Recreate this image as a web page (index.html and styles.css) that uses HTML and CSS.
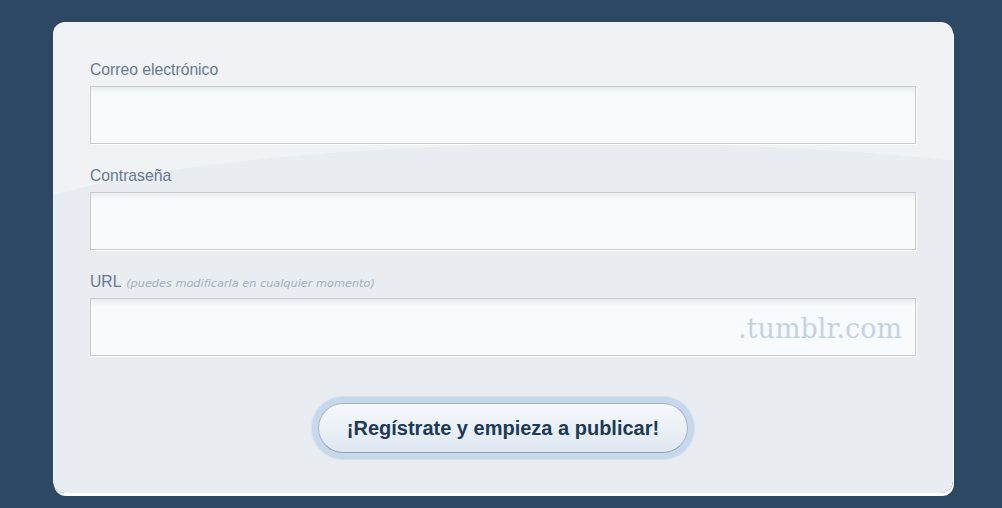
FILE: index.html
```html
<!DOCTYPE html>
<html lang="es">
<head>
<meta charset="utf-8">
<title>Regístrate</title>
<link rel="stylesheet" href="styles.css">
</head>
<body>
<form class="card">
  <div class="field">
    <label class="label" for="email">Correo electrónico</label>
    <div class="box"><input id="email" class="input" type="text"></div>
  </div>
  <div class="field">
    <label class="label" for="pass">Contraseña</label>
    <div class="box"><input id="pass" class="input" type="password"></div>
  </div>
  <div class="field">
    <label class="label" for="url">URL <span class="hint">(puedes modificarla en cualquier momento)</span></label>
    <div class="box"><input id="url" class="input" type="text"><span class="suffix">.tumblr.com</span></div>
  </div>
  <div class="actions">
    <button class="btn" type="button">¡Regístrate y empieza a publicar!</button>
  </div>
</form>
</body>
</html>
```
FILE: styles.css
```css
html, body {
  margin: 0;
  padding: 0;
}
body {
  background: #2c4864;
  width: 1002px;
  height: 508px;
  overflow: hidden;
  font-family: "Liberation Sans", Arial, sans-serif;
}
.card {
  box-sizing: border-box;
  width: 900px;
  height: 471px;
  margin: 22px 0 0 53px;
  padding: 38px 37px 0 37px;
  border-radius: 12px;
  background:
    radial-gradient(ellipse 620px 98px at 547px 219px, #e9ecf0 99.5%, rgba(233,236,240,0) 100%),
    linear-gradient(to bottom, #f0f2f6 0, #f0f2f6 219px, #e9ecf0 219px, #e9ecf0 100%);
  box-shadow: 1px 3px 0 #ffffff;
  display: flex;
  flex-direction: column;
  gap: 22px;
}
.field {
  display: flex;
  flex-direction: column;
  gap: 7px;
}
.label {
  font-size: 15.7px;
  line-height: 18px;
  height: 18px;
  padding-top: 1px;
  color: #68798e;
  white-space: nowrap;
}
.hint {
  font-family: "DejaVu Sans", Verdana, sans-serif;
  font-style: italic;
  font-size: 11.3px;
  color: #a2b0c1;
  margin-left: 1px;
}
.box {
  box-sizing: border-box;
  height: 58px;
  display: flex;
  align-items: center;
  background: linear-gradient(to bottom, #e9edf1 0, #f7fbfe 7px, #f7fbfe 100%);
  border: 1px solid #c8c9cb;
  box-shadow: 1px 1px 0 #ffffff;
}
.input {
  flex: 1;
  min-width: 0;
  height: 100%;
  border: 0;
  padding: 0 12px;
  margin: 0;
  background: transparent;
  font-family: "Liberation Sans", Arial, sans-serif;
  font-size: 20px;
  color: #444;
  outline: none;
}
.suffix {
  font-family: "DejaVu Serif", Georgia, serif;
  font-size: 27px;
  color: #c3d3e3;
  padding-right: 13px;
  padding-top: 2px;
}
.actions {
  display: flex;
  justify-content: center;
  margin-top: 25px;
}
.btn {
  box-sizing: border-box;
  height: 50px;
  padding: 0 28px;
  border-radius: 25px;
  border: 1px solid #a3b3c4;
  border-bottom-color: #8d9db0;
  background: linear-gradient(to bottom, #f6f8fb 0%, #eaf0f6 50%, #dde7f1 100%);
  box-shadow: 0 0 0 6px #c6d8eb, 0 0 1px 7px rgba(198,216,235,0.6);
  font-family: "Liberation Sans", Arial, sans-serif;
  font-weight: bold;
  font-size: 20px;
  color: #1c3a57;
  cursor: pointer;
}
```
